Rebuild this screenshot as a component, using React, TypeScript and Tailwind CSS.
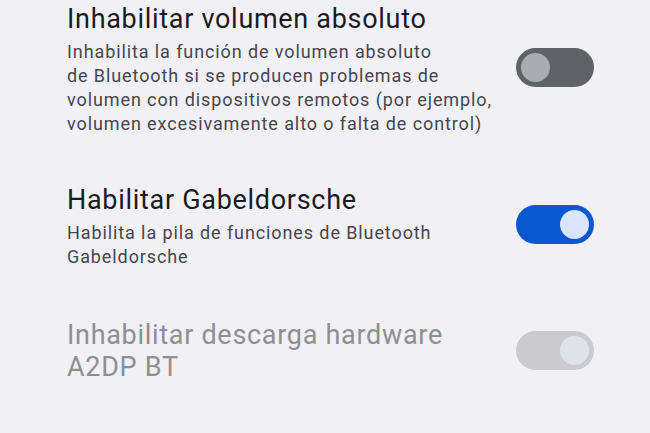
import React from "react"

type Row = {
  title: string
  desc?: React.ReactNode
  state: "off" | "on" | "disabled"
}

const rows: Row[] = [
  {
    title: "Inhabilitar volumen absoluto",
    desc: (
      <>
        Inhabilita la función de volumen absoluto
        <br />
        de Bluetooth si se producen problemas de
        <br />
        volumen con dispositivos remotos (por ejemplo,
        <br />
        volumen excesivamente alto o falta de control)
      </>
    ),
    state: "off",
  },
  {
    title: "Habilitar Gabeldorsche",
    desc: "Habilita la pila de funciones de Bluetooth Gabeldorsche",
    state: "on",
  },
  {
    title: "Inhabilitar descarga hardware A2DP BT",
    state: "disabled",
  },
]

function Toggle({ state }: { state: Row["state"] }) {
  const track =
    state === "on"
      ? "bg-[#0b57d0] justify-end mb-[5px]"
      : state === "off"
        ? "bg-[#5f6368] justify-start mb-[5px]"
        : "bg-[#cbcbcf] justify-end mb-[1px]"
  const thumb = state === "on" ? "bg-[#d8e5fc]" : state === "off" ? "bg-[#a9acb1]" : "bg-[#dde3ea]"
  return (
    <div className={`w-[78px] h-[39px] flex-shrink-0 rounded-full flex items-center px-[5px] ${track}`}>
      <div className={`w-[29px] h-[29px] rounded-full ${thumb}`} />
    </div>
  )
}

export default function App() {
  return (
    <div
      className="w-[650px] h-[433px] overflow-hidden bg-[#f1f0f5] pt-[3px] flex flex-col gap-[48px]"
      style={{ fontFamily: "Roboto, 'Noto Sans', sans-serif" }}
    >
      {rows.map((row, i) => (
        <div key={i} className={`flex items-center gap-4 pl-[67px] pr-[56px] ${i === 2 ? "mt-[2px]" : ""}`}>
          <div className="flex-1 min-w-0">
            <div
              className={`text-[27px] leading-[32px] tracking-[0.7px] ${
                row.state === "disabled" ? "text-[#8e8f93]" : "text-[#1c1b1f]"
              }`}
            >
              {row.title}
            </div>
            {row.desc && (
              <div className="mt-[5px] text-[18px] leading-[24px] tracking-[0.9px] text-[#46464f]">{row.desc}</div>
            )}
          </div>
          <Toggle state={row.state} />
        </div>
      ))}
    </div>
  )
}
